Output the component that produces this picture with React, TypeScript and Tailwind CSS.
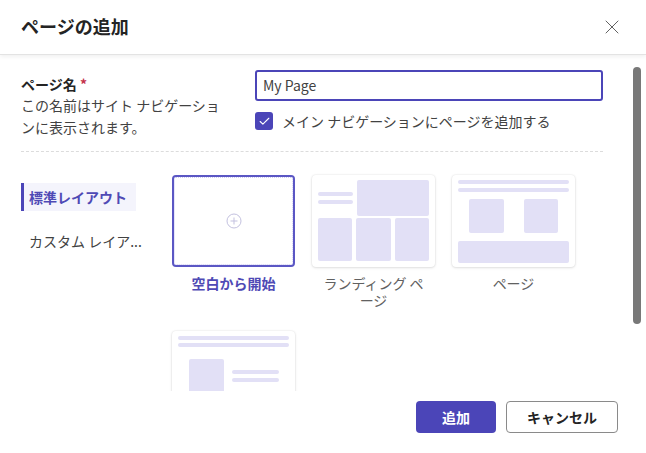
import React from "react";
import { X, Check } from "lucide-react";

const block = "bg-[#e2e0f6] rounded-[2px]";

function BlankThumb() {
  return (
    <div className="h-[92px] rounded-[4px] border-2 border-[#5b57c4] bg-white">
      <div className="h-full rounded-[2px] border border-dotted border-[#cfcdf3] flex items-center justify-center">
        <svg width="16" height="16" viewBox="0 0 16 16" fill="none" stroke="#c3c1df" strokeWidth="1">
          <circle cx="8" cy="8" r="7" />
          <path d="M8 4.5v7M4.5 8h7" />
        </svg>
      </div>
    </div>
  );
}

function LandingThumb() {
  return (
    <div className="h-[92px] rounded-[4px] bg-white shadow-[0_0_2px_rgba(0,0,0,0.12),0_1px_3px_rgba(0,0,0,0.1)] pt-[5px] px-[6px]">
      <div className="flex gap-[4px] h-[36px]">
        <div className="w-[35px] flex flex-col justify-center gap-[4px]">
          <div className={`h-[4px] ${block}`} />
          <div className={`h-[4px] ${block}`} />
        </div>
        <div className={`flex-1 ${block}`} />
      </div>
      <div className="mt-[2px] grid grid-cols-3 gap-[4px] h-[43px]">
        <div className={block} />
        <div className={block} />
        <div className={block} />
      </div>
    </div>
  );
}

function PageThumb() {
  return (
    <div className="h-[92px] rounded-[4px] bg-white shadow-[0_0_2px_rgba(0,0,0,0.12),0_1px_3px_rgba(0,0,0,0.1)] pt-[5px] px-[6px]">
      <div className={`h-[4px] ${block}`} />
      <div className={`h-[4px] mt-[4px] ${block}`} />
      <div className="mt-[7px] flex justify-center gap-[20px]">
        <div className={`w-[35px] h-[34px] ${block}`} />
        <div className={`w-[34px] h-[34px] ${block}`} />
      </div>
      <div className={`mt-[8px] h-[22px] ${block}`} />
    </div>
  );
}

function ArticleThumb() {
  return (
    <div className="h-[92px] rounded-[4px] bg-white shadow-[0_0_2px_rgba(0,0,0,0.12),0_1px_3px_rgba(0,0,0,0.1)] pt-[5px] px-[6px]">
      <div className={`h-[4px] ${block}`} />
      <div className={`h-[4px] mt-[3px] ${block}`} />
      <div className="mt-[12px] pl-[11px] flex items-center gap-[8px]">
        <div className={`w-[35px] h-[34px] ${block}`} />
        <div className="w-[47px] flex flex-col gap-[4px]">
          <div className={`h-[4px] ${block}`} />
          <div className={`h-[4px] ${block}`} />
        </div>
      </div>
    </div>
  );
}

const templates = [
  { name: "空白から開始", thumb: <BlankThumb />, active: true },
  { name: "ランディング ページ", thumb: <LandingThumb /> },
  { name: "ページ", thumb: <PageThumb /> },
  { name: "", thumb: <ArticleThumb /> },
];

export default function App() {
  return (
    <div className="w-[646px] h-[453px] bg-white flex flex-col overflow-hidden font-['Noto_Sans_CJK_JP',sans-serif] text-[#242424]">
      {/* header */}
      <header className="relative z-10 h-[55px] shrink-0 flex items-center justify-between pl-[21px] pr-[22px] border-b border-[#e3e3e3] shadow-[0_2px_4px_rgba(0,0,0,0.06)]">
        <h1 className="text-[18px] leading-[24px] font-bold text-[#242424] -mt-[2px]">ページの追加</h1>
        <X size={24} strokeWidth={1} className="text-[#616161] -mt-[1px]" />
      </header>

      {/* scroll area */}
      <div className="flex-1 min-h-0 flex overflow-hidden">
        <div className="flex-1 pl-[21px] pr-[30px] overflow-hidden">
          {/* name form */}
          <div className="flex pt-[15px] pb-[13px] border-b border-dashed border-[#dcdcdc]">
            <div className="w-[234px] pt-[4px]">
              <div className="text-[14px] leading-[20px] font-semibold">
                ページ名 <span className="text-[#c4314b]">*</span>
              </div>
              <p className="text-[14px] leading-[22px] text-[#424242] w-[210px]">
                この名前はサイト ナビゲーションに表示されます。
              </p>
            </div>
            <div className="flex-1">
              <div className="h-[31px] border-2 border-[#4b45b8] rounded-[3px] flex items-center px-[6px] text-[14px] text-[#424242]">
                My Page
              </div>
              <div className="mt-[10px] flex items-center gap-[9px]">
                <div className="w-[18px] h-[18px] rounded-[3px] bg-[#4b45b8] flex items-center justify-center">
                  <Check size={13} strokeWidth={2} className="text-white" />
                </div>
                <span className="text-[14px] leading-[20px] text-[#424242]">メイン ナビゲーションにページを追加する</span>
              </div>
            </div>
          </div>

          {/* layouts */}
          <div className="flex pt-[23px]">
            <nav className="w-[151px] shrink-0 pt-[8px] flex flex-col items-start gap-[16px]">
              <div className="h-[28px] flex items-center pl-[5px] pr-[9px] border-l-[3px] border-[#4b45b8] bg-[#f4f4fc] text-[14px] font-bold text-[#4f4ab5]">
                標準レイアウト
              </div>
              <div className="h-[28px] pl-[8px] flex items-center text-[14px] text-[#424242] whitespace-nowrap">
                カスタム レイア...
              </div>
            </nav>
            <div className="grid grid-cols-[123px_123px_123px] gap-x-[17px] gap-y-[22px]">
              {templates.map((t, i) => (
                <div key={i}>
                  {t.thumb}
                  {t.name && (
                    <div
                      className={`mt-[8px] text-center text-[14px] leading-[17px] px-[6px] ${
                        t.active ? "text-[#4f4ab5] font-semibold" : "text-[#616161]"
                      }`}
                    >
                      {t.name}
                    </div>
                  )}
                </div>
              ))}
            </div>
          </div>
        </div>
        {/* scrollbar */}
        <div className="w-[8px] mr-[5px] pt-[12px] shrink-0">
          <div className="h-[257px] rounded-full bg-[#787878]" />
        </div>
      </div>

      {/* footer */}
      <footer className="h-[62px] shrink-0 flex justify-end items-start gap-[10px] pt-[10px] pr-[28px]">
        <button className="w-[80px] h-[32px] rounded-[4px] bg-[#4b45b8] text-white text-[14px] font-semibold">
          追加
        </button>
        <button className="w-[112px] h-[32px] rounded-[4px] border border-[#8a8a8a] bg-white text-[#242424] text-[14px] font-semibold">
          キャンセル
        </button>
      </footer>
    </div>
  );
}
